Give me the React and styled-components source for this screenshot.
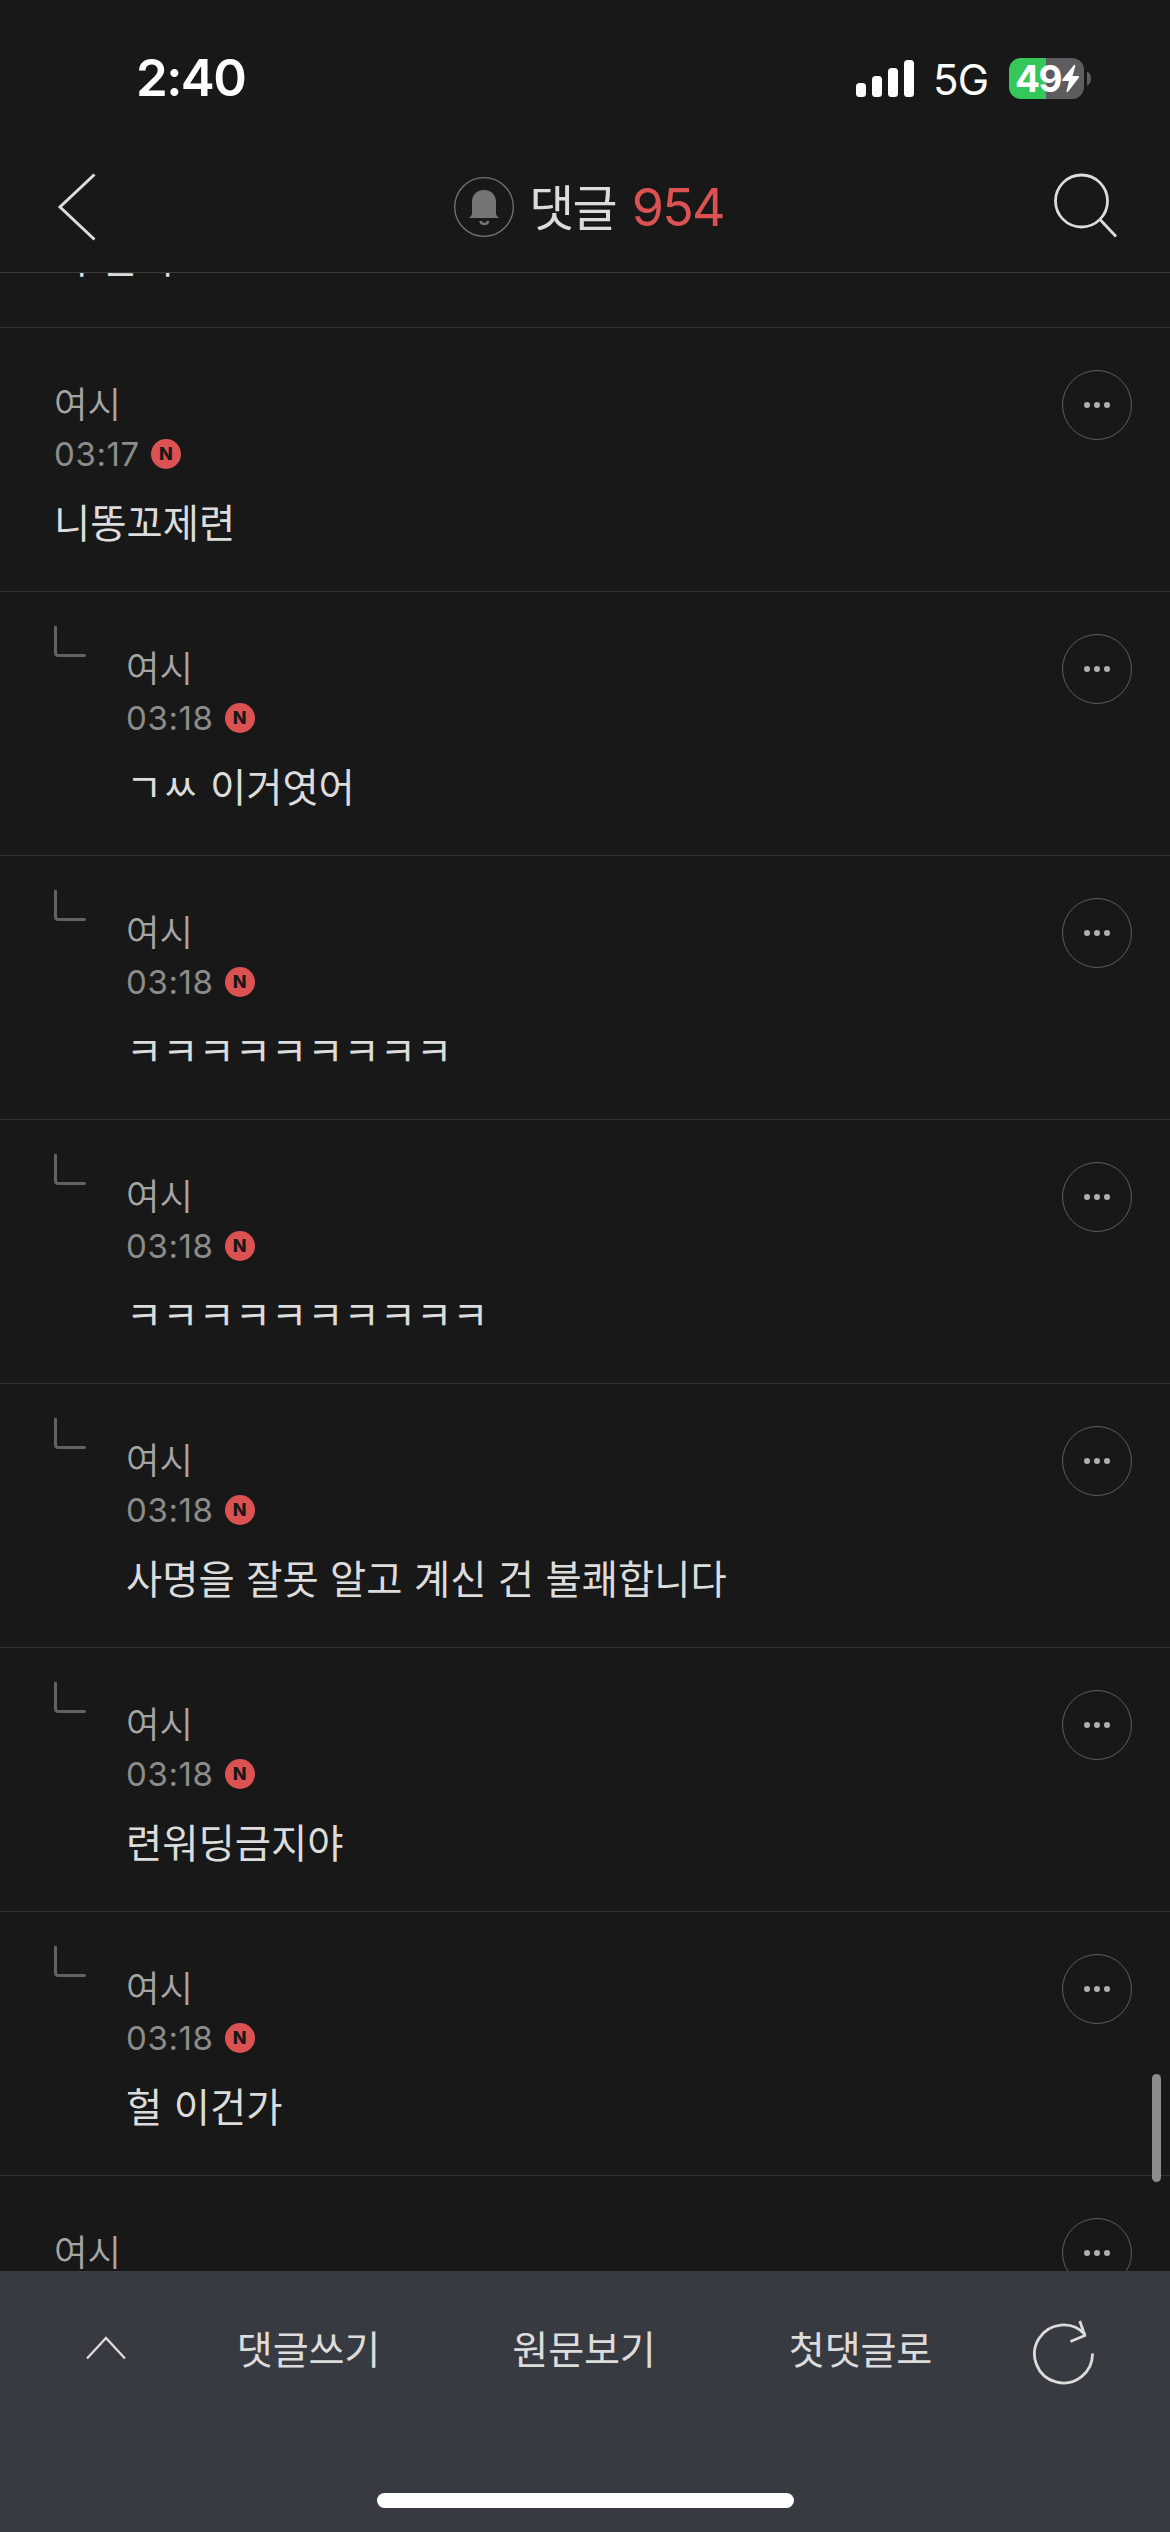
import React from "react";
import styled, { createGlobalStyle } from "styled-components";

const Global = createGlobalStyle`
  * { box-sizing: border-box; }
  body { margin: 0; background: #181818; }
  button { all: unset; box-sizing: border-box; }
`;

const korean = `"Noto Sans CJK KR", sans-serif`;
const latin = `Inter, "Noto Sans CJK KR", sans-serif`;

const Screen = styled.div`
  position: relative;
  width: 1170px;
  height: 2532px;
  display: flex;
  flex-direction: column;
  overflow: hidden;
  background: #181818;
  color: #dcdcdc;
  font-family: ${korean};
  white-space: nowrap;
`;

const StatusBar = styled.div`
  flex: none;
  height: 156px;
  padding: 0 79px 0 136px;
  display: flex;
  align-items: center;
  justify-content: space-between;
  color: #fff;
  font-family: ${latin};
`;

const Clock = styled.time`
  font-size: 51px;
  font-weight: 600;
  letter-spacing: -1.6px;
  line-height: 60px;
`;

const StatusIcons = styled.div`
  display: flex;
  align-items: center;
`;

const Bars = styled.div`
  display: flex;
  align-items: flex-end;
  gap: 6px;
  height: 37px;
`;

const Bar = styled.span`
  width: 10px;
  height: ${(p) => p.$h}px;
  border-radius: 3.5px;
  background: #fff;
`;

const Network = styled.span`
  width: 75px;
  padding-left: 19px;
  padding-top: 3px;
  font-size: 42px;
  letter-spacing: -0.8px;
  line-height: 48px;
`;

const Battery = styled.div`
  width: 75px;
  height: 41px;
  margin-left: 20px;
  padding-left: 6px;
  border-radius: 12px;
  display: flex;
  align-items: center;
  background: linear-gradient(90deg, #34c759 50%, #5d5d5f 50%);
  font-size: 37px;
  font-weight: 700;
  letter-spacing: -1.6px;
  line-height: 41px;
`;

const BatteryTip = styled.span`
  width: 4px;
  height: 13px;
  margin-left: 3px;
  border-radius: 0 4px 4px 0 / 0 7px 7px 0;
  background: #5d5d5f;
`;

const Header = styled.header`
  flex: none;
  height: 117px;
  padding: 0 50px 14px 54px;
  display: grid;
  grid-template-columns: 100px 1fr 100px;
  align-items: center;
  border-bottom: 1px solid #3b3b3b;
`;

const HeaderButton = styled.button`
  display: flex;
  justify-content: ${(p) => p.$align};
`;

const Title = styled.h1`
  margin: 0 0 0 4px;
  display: flex;
  align-items: center;
  justify-content: center;
  font-weight: 400;
  font-size: 49px;
  line-height: 80px;
`;

const Alarm = styled.span`
  display: flex;
  margin-right: 15px;
`;

const TitleText = styled.span`
  padding-bottom: 5px;
  letter-spacing: -1.8px;
`;

const Count = styled.span`
  margin-left: 16px;
  padding-top: 1px;
  font-family: ${latin};
  font-size: 52px;
  letter-spacing: -1.8px;
  color: #dc5252;
`;

const List = styled.main`
  flex: none;
  height: 1998px;
  overflow: hidden;
  display: flex;
  flex-direction: column;
  justify-content: flex-start;
`;

const Comment = styled.article`
  flex: none;
  height: 264px;
  padding: 50px 38px 0 54px;
  border-top: 1px solid #323232;
  display: flex;
`;

const ScrolledComment = styled.article`
  flex: none;
  height: 54px;
  padding-left: 54px;
`;

const ReplyMark = styled.span`
  flex: none;
  width: 72px;
  margin-top: -17px;
`;

const Entry = styled.div`
  flex: 1;
  display: flex;
  flex-direction: column;
`;

const Name = styled.span`
  height: 50px;
  font-size: 36.5px;
  line-height: 50px;
  font-weight: 350;
  color: #a6a6a6;
`;

const Meta = styled.span`
  height: 50px;
  margin-top: 1px;
  display: flex;
  align-items: center;
  gap: 11px;
  color: #8c8c8c;
  font-family: ${latin};
  font-size: 33px;
  letter-spacing: 0.6px;
`;

const NewBadge = styled.span`
  width: 30px;
  height: 30px;
  border-radius: 50%;
  display: flex;
  align-items: center;
  justify-content: center;
  background: #dc5252;
  color: #181818;
  font-size: 18px;
  font-weight: 800;
  line-height: 30px;
  letter-spacing: 0;
`;

const Body = styled.p`
  margin: ${(p) => (p.$scrolled ? -42 : 17)}px 0 0;
  font-size: 39.4px;
  line-height: 50px;
  word-spacing: 2.6px;
  color: #dcdcdc;
`;

const More = styled.button`
  flex: none;
  width: 70px;
  height: 70px;
  margin-top: -8px;
  border: 1px solid #5e5e5e;
  border-radius: 50%;
  display: flex;
  align-items: center;
  justify-content: center;
  gap: 4px;
`;

const Dot = styled.i`
  width: 6px;
  height: 6px;
  border-radius: 50%;
  background: #b0b0b0;
`;

const ScrollThumb = styled.span`
  position: absolute;
  right: 9px;
  top: 2074px;
  width: 9px;
  height: 108px;
  border-radius: 5px;
  background: rgba(158, 158, 158, 0.86);
`;

const Footer = styled.footer`
  flex: 1;
  display: flex;
  flex-direction: column;
  align-items: center;
  justify-content: space-between;
  padding-bottom: 24px;
  background: #383a42;
`;

const Tools = styled.nav`
  width: 100%;
  height: 154px;
  display: grid;
  grid-template-columns: 171px 275px 276px 277px 1fr;
  align-items: center;
`;

const Tool = styled.button`
  display: flex;
  align-items: center;
  justify-content: center;
  padding: ${(p) => p.$pad || "0 0 3px"};
  font-size: 39.2px;
  letter-spacing: -0.2px;
  line-height: 50px;
`;

const HomeIndicator = styled.div`
  width: 417px;
  height: 15px;
  border-radius: 8px;
  background: #fff;
`;

const comments = [
  { time: "03:17", text: "니똥꼬제련" },
  { time: "03:18", text: "ㄱㅆ 이거엿어", reply: true },
  { time: "03:18", text: "ㅋㅋㅋㅋㅋㅋㅋㅋㅋ", reply: true },
  { time: "03:18", text: "ㅋㅋㅋㅋㅋㅋㅋㅋㅋㅋ", reply: true },
  { time: "03:18", text: "사명을 잘못 알고 계신 건 불쾌합니다", reply: true },
  { time: "03:18", text: "련워딩금지야", reply: true },
  { time: "03:18", text: "헐 이건가", reply: true },
  {},
];

function CommentRow({ time, text, reply }) {
  return (
    <Comment>
      {reply && (
        <ReplyMark>
          <svg width="33" height="33" viewBox="0 0 33 33" fill="none" stroke="#626262" strokeWidth="3" strokeLinecap="round">
            <path d="M1.5 2V27.5Q1.5 30.5 4.500 30.5H30.500" />
          </svg>
        </ReplyMark>
      )}
      <Entry>
        <Name>여시</Name>
        {time && (
          <Meta>
            {time}
            <NewBadge>N</NewBadge>
          </Meta>
        )}
        {text && <Body>{text}</Body>}
      </Entry>
      <More aria-label="더보기">
        <Dot />
        <Dot />
        <Dot />
      </More>
    </Comment>
  );
}

export default function App() {
  return (
    <Screen>
      <Global />
      <StatusBar>
        <Clock>2:40</Clock>
        <StatusIcons>
          <Bars>
            {[14, 21, 29, 37].map((h) => (
              <Bar key={h} $h={h} />
            ))}
          </Bars>
          <Network>5G</Network>
          <Battery>
            49
            <svg width="19" height="29" viewBox="0 0 19 29" fill="#fff">
              <path d="M13 1 1.300 15.500Q.6 16.900 2 17H8L5.500 27Q5.500 28.800 7 27.800L18 13.500Q18.700 12.200 17.200 12H11.500L14.300 2Q14.300.2 13 1Z" />
            </svg>
          </Battery>
          <BatteryTip />
        </StatusIcons>
      </StatusBar>

      <Header>
        <HeaderButton $align="flex-start" aria-label="뒤로">
          <svg width="46" height="70" viewBox="0 0 46 70" fill="none" stroke="#dcdcdc" strokeWidth="3">
            <path d="M40.500 2.500 6 35 40.500 67.500" />
          </svg>
        </HeaderButton>
        <Title>
          <Alarm>
            <svg width="60" height="60" viewBox="0 0 60 60" fill="none">
              <circle cx="30" cy="30" r="29.300" stroke="#757575" strokeWidth="1.300" />
              <path d="M18 37V25C18 17.500 23 13 30 13S42 17.500 42 25V37Q42.500 39.500 45 41H15Q17.500 39.500 18 37Z" fill="#757575" />
              <path d="M26.500 44Q27 47 30.300 47T34.200 44" stroke="#757575" strokeWidth="2.600" />
            </svg>
          </Alarm>
          <TitleText>댓글</TitleText>
          <Count>954</Count>
        </Title>
        <HeaderButton $align="flex-end" aria-label="검색">
          <svg width="66" height="68" viewBox="0 0 66 68" fill="none" stroke="#dcdcdc" strokeWidth="2.800">
            <circle cx="27.500" cy="28" r="26" />
            <path d="M46 46.500 62 63.500" />
          </svg>
        </HeaderButton>
      </Header>

      <List>
        <ScrolledComment>
          <Body $scrolled>아 근거</Body>
        </ScrolledComment>
        {comments.map((c, i) => (
          <CommentRow key={i} {...c} />
        ))}
      </List>
      <ScrollThumb />

      <Footer>
        <Tools>
          <Tool $pad="0 0 0 41px" aria-label="위로">
            <svg width="42" height="26" viewBox="0 0 42 26" fill="none" stroke="#dcdcdc" strokeWidth="2.300">
              <path d="M2 23.500 21 3 40 23.500" />
            </svg>
          </Tool>
          <Tool>댓글쓰기</Tool>
          <Tool>원문보기</Tool>
          <Tool>첫댓글로</Tool>
          <Tool $pad="9px 41px 0 0" aria-label="새로고침">
            <svg width="64" height="66" viewBox="0 0 64 66" fill="none" stroke="#dcdcdc" strokeWidth="2.800">
              <path d="M60.500 33.500A29 29 0 1 1 53 14.500" />
              <path d="M47.800 1 52.800 15.500 38.500 21.500" />
            </svg>
          </Tool>
        </Tools>
        <HomeIndicator />
      </Footer>
    </Screen>
  );
}
